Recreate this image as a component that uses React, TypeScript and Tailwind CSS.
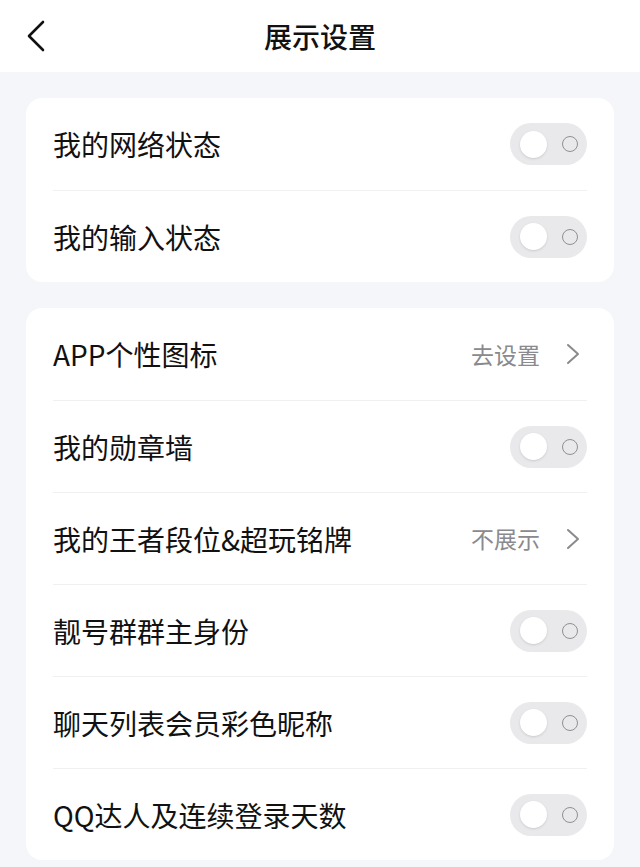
type Row = { label: string; value?: string };

const group1: Row[] = [{ label: '我的网络状态' }, { label: '我的输入状态' }];

const group2: Row[] = [
  { label: 'APP个性图标', value: '去设置' },
  { label: '我的勋章墙' },
  { label: '我的王者段位&超玩铭牌', value: '不展示' },
  { label: '靓号群群主身份' },
  { label: '聊天列表会员彩色昵称' },
  { label: 'QQ达人及连续登录天数' },
];

function Toggle() {
  return (
    <div className="w-[77px] h-[42px] rounded-full bg-[#e9e9eb] flex items-center justify-between pl-[10px] pr-[9px]">
      <div className="w-[27px] h-[27px] rounded-full bg-white shadow-sm" />
      <div className="w-[16px] h-[16px] rounded-full border-[1.5px] border-[#8f8f94]" />
    </div>
  );
}

function Card({ rows }: { rows: Row[] }) {
  return (
    <div className="mx-[26px] bg-white rounded-[16px] px-[27px]">
      {rows.map((row, i) => (
        <div
          key={row.label}
          className={`h-[92px] flex items-center justify-between ${
            i > 0 ? 'border-t border-[#f0f0f2]' : ''
          }`}
        >
          <span className="text-[28px] text-[#111]">{row.label}</span>
          {row.value ? (
            <div className="flex items-center gap-[26px] pr-[7px] text-[#8a8a8e]">
              <span className="text-[23px]">{row.value}</span>
              <svg width="14" height="22" viewBox="0 0 14 22" fill="none">
                <path d="M2 2 L12 11 L2 20" stroke="#8a8a8e" strokeWidth="2" strokeLinecap="round" strokeLinejoin="round" />
              </svg>
            </div>
          ) : (
            <Toggle />
          )}
        </div>
      ))}
    </div>
  );
}

export default function App() {
  return (
    <div
      className="min-h-[867px] bg-[#f5f6fa]"
      style={{ fontFamily: '"Noto Sans CJK SC", "Noto Sans", sans-serif' }}
    >
      {/* Top bar */}
      <div className="relative h-[72px] bg-white flex items-center justify-center">
        <svg className="absolute left-[25px] top-[20px]" width="22" height="32" viewBox="0 0 22 32" fill="none">
          <path d="M18 2 L4 16 L18 30" stroke="#111" strokeWidth="2.6" strokeLinecap="round" strokeLinejoin="round" />
        </svg>
        <h1 className="text-[28px] font-medium text-[#111]">展示设置</h1>
      </div>

      <div className="pt-[26px] flex flex-col gap-[26px]">
        <Card rows={group1} />
        <Card rows={group2} />
      </div>
    </div>
  );
}
